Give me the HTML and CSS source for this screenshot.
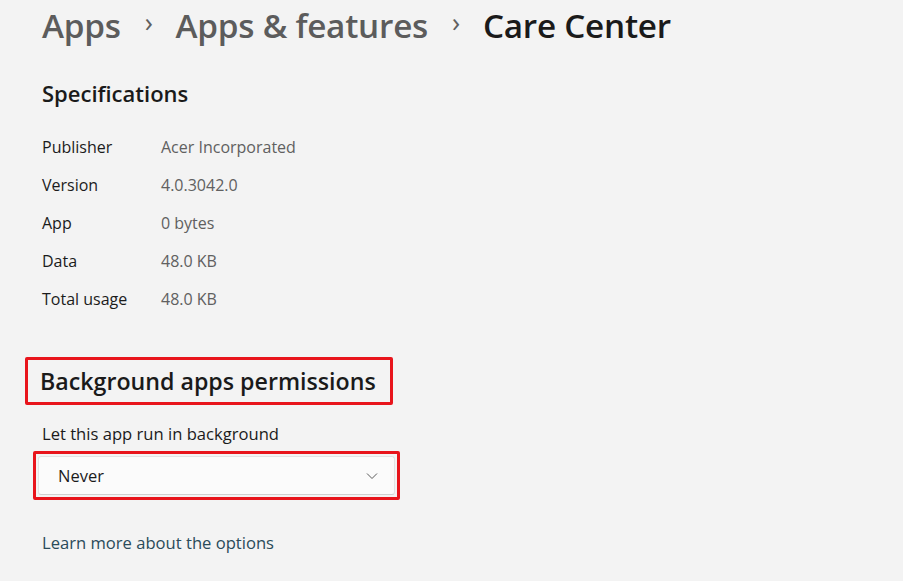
FILE: index.html
```html
<!DOCTYPE html>
<html lang="en">
<head>
<meta charset="utf-8">
<link rel="stylesheet" href="styles.css">
</head>
<body>
<div class="page">
  <h1 class="crumbs">
    <span class="crumb">Apps</span>
    <span class="sep">&#x203A;</span>
    <span class="crumb">Apps &amp; features</span>
    <span class="sep">&#x203A;</span>
    <span class="crumb current">Care Center</span>
  </h1>

  <h2 class="section-title">Specifications</h2>
  <div class="specs">
    <div class="label">Publisher</div><div class="value">Acer Incorporated</div>
    <div class="label">Version</div><div class="value">4.0.3042.0</div>
    <div class="label">App</div><div class="value">0 bytes</div>
    <div class="label">Data</div><div class="value">48.0 KB</div>
    <div class="label">Total usage</div><div class="value">48.0 KB</div>
  </div>

  <div class="highlight title-box">
    <h2 class="section-title bg">Background apps permissions</h2>
  </div>

  <div class="field-label">Let this app run in background</div>
  <div class="highlight select-box">
    <div class="select">
      <span>Never</span>
      <svg class="chev" width="12" height="8" viewBox="0 0 12 8"><path d="M1 1.5 L6 6.5 L11 1.5" fill="none" stroke="#5a5a5a" stroke-width="1"/></svg>
    </div>
  </div>

  <a class="link" href="#">Learn more about the options</a>
</div>
</body>
</html>
```

FILE: styles.css
```css
html, body {
  margin: 0;
  padding: 0;
  background: #f3f3f3;
}
body {
  font-family: "Open Sans", "Noto Sans", sans-serif;
  color: #1b1b1b;
}
.page {
  padding: 0 0 0 42px;
  display: flex;
  flex-direction: column;
  align-items: flex-start;
}
.crumbs {
  margin: 0;
  margin-top: 1px;
  font-weight: 600;
  font-size: 33.3px;
  line-height: 48px;
  display: flex;
  align-items: center;
  letter-spacing: -0.25px;
}
.crumb { color: #5c5c5c; }
.crumb.current { color: #1a1a1a; }
.sep {
  color: #5f5f5f;
  font-size: 27px;
  font-weight: 400;
  margin: 0 23px 0 24px;
  position: relative;
  top: -3px;
}
.section-title {
  margin: 0;
  font-weight: 600;
  font-size: 22px;
  line-height: 30px;
  color: #1a1a1a;
}
.crumbs + .section-title {
  margin-top: 29px;
}
.specs {
  margin-top: 20px;
  display: grid;
  grid-template-columns: 119px auto;
  font-size: 16px;
  line-height: 38px;
}
.label { color: #1b1b1b; }
.value { color: #606060; }
.highlight {
  border: 3px solid #e8141b;
  border-radius: 2px;
  box-sizing: border-box;
}
.title-box {
  margin-top: 39px;
  margin-left: -17px;
  width: 368px;
  height: 48px;
  padding: 5px 0 0 12px;
}
.section-title.bg {
  font-size: 23.2px;
  line-height: 32px;
  font-weight: 600;
  letter-spacing: 0;
}
.field-label {
  margin-top: 18px;
  font-size: 16.6px;
  line-height: 22px;
  color: #1b1b1b;
}
.select-box {
  margin-top: 6px;
  margin-left: -9px;
  width: 367px;
  height: 49px;
  padding: 2px;
}
.select {
  height: 39px;
  box-sizing: border-box;
  background: #fbfbfb;
  border: 1px solid #e3e3e3;
  border-bottom-color: #d0d0d0;
  border-radius: 3px;
  display: flex;
  align-items: center;
  justify-content: space-between;
  padding: 0 16px 0 19px;
  font-size: 16.5px;
  color: #1b1b1b;
}
.chev { display: block; }
.link {
  margin-top: 31px;
  font-size: 16.6px;
  color: #2a4b5a;
  text-decoration: none;
}
```
